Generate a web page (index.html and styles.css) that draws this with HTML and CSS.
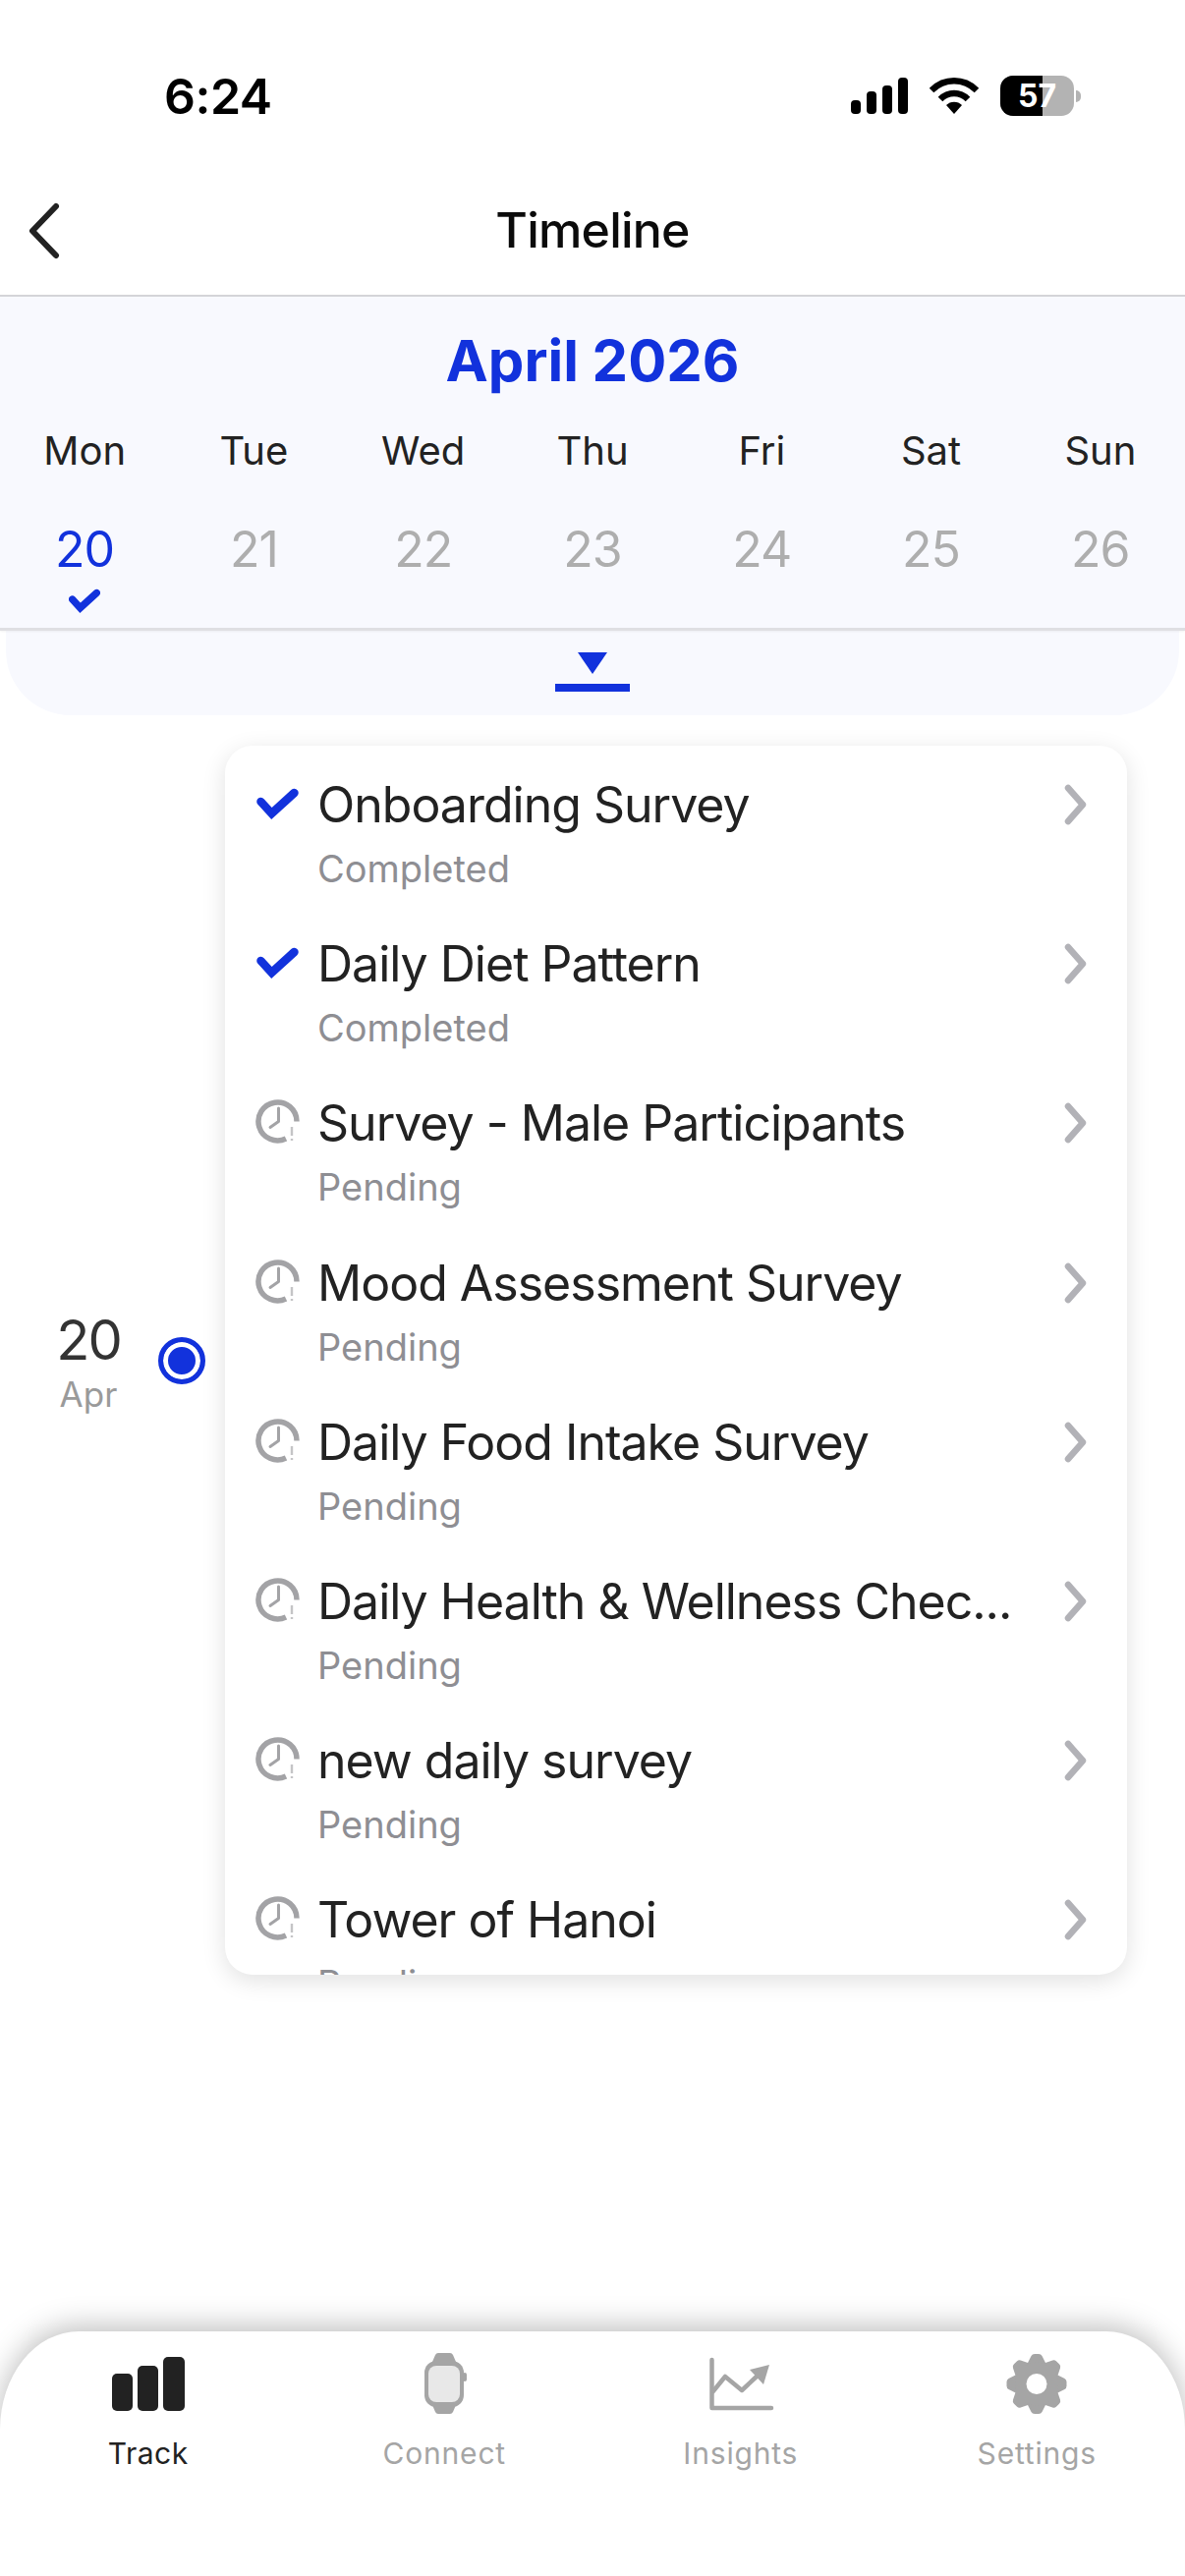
FILE: index.html
```html
<!DOCTYPE html>
<html lang="en">
<head>
<meta charset="utf-8">
<title>Timeline</title>
<link rel="stylesheet" href="styles.css">
</head>
<body>
<svg class="defs" width="0" height="0" aria-hidden="true">
  <symbol id="check" viewBox="0 0 44 34"><path d="M5 15 L16 27 L39 6" fill="none" stroke="#1232dc" stroke-linecap="round" stroke-linejoin="miter"/></symbol>
  <symbol id="clock" viewBox="0 0 45 45">
    <path d="M42 22.5 A19.5 19.5 0 1 0 31 40" fill="none" stroke="#a3a3a6" stroke-width="5.5"/>
    <path d="M23.5 9 V22.5 L15 28.5" fill="none" stroke="#a3a3a6" stroke-width="3" stroke-linecap="round" stroke-linejoin="round"/>
    <path d="M37 28 V37 M37 40 V42" fill="none" stroke="#c4c4c6" stroke-width="2.4"/>
  </symbol>
  <symbol id="chev" viewBox="0 0 24 42"><path d="M4 4 L19 21 L4 38" fill="none" stroke="#b2b2b7" stroke-width="6.5" stroke-linecap="round" stroke-linejoin="round"/></symbol>
  <symbol id="tooth" viewBox="0 0 76 64"><path d="M28 12 L32.5 3 Q33.5 1 36 1 H40 Q42.500 1 43.500 3 L48 12 Z"/></symbol>
</svg>
<div class="page">
  <header class="status">
    <span class="time">6:24</span>
    <div class="status-icons">
      <svg class="signal" width="58" height="38" viewBox="0 0 58 38"><rect x="0" y="23" width="10" height="14" rx="4"/><rect x="16" y="14" width="10" height="23" rx="4"/><rect x="32" y="8" width="10" height="29" rx="4"/><rect x="48" y="0" width="10" height="37" rx="4"/></svg>
      <svg class="wifi" width="50" height="38" viewBox="0 0 50 38"><path d="M2 13 C15 0 35 0 48 13" fill="none" stroke="#000" stroke-width="6.5"/><path d="M11 22 C19 14 31 14 39 22" fill="none" stroke="#000" stroke-width="6.5"/><path d="M17 28 C21 23.5 29 23.5 33 28 L25 37 Z" fill="#000"/></svg>
      <div class="battery"><div class="battery-body"><span class="battery-level"></span><span class="battery-text">57</span></div><span class="battery-nub"></span></div>
    </div>
  </header>
  <nav class="navbar">
    <svg class="back" width="36" height="60" viewBox="0 0 36 60"><path d="M30 5 L6 30 L30 55" fill="none" stroke="#222" stroke-width="6" stroke-linecap="round" stroke-linejoin="round"/></svg>
    <h1 class="nav-title">Timeline</h1>
  </nav>
  <section class="calendar">
    <h2 class="month">April 2026</h2>
    <div class="week">
      <div class="day"><span class="dow">Mon</span><span class="date is-active">20</span><svg class="day-check" width="32" height="25"><use href="#check"/></svg></div>
      <div class="day"><span class="dow">Tue</span><span class="date">21</span></div>
      <div class="day"><span class="dow">Wed</span><span class="date">22</span></div>
      <div class="day"><span class="dow">Thu</span><span class="date">23</span></div>
      <div class="day"><span class="dow">Fri</span><span class="date">24</span></div>
      <div class="day"><span class="dow">Sat</span><span class="date">25</span></div>
      <div class="day"><span class="dow">Sun</span><span class="date">26</span></div>
    </div>
  </section>
  <div class="expander">
    <span class="expander-tri"></span>
    <span class="expander-bar"></span>
  </div>
  <main class="timeline">
    <div class="stamp"><span class="stamp-day">20</span><span class="stamp-month">Apr</span></div>
    <span class="dot"></span>
    <div class="card">
      <a class="row"><svg class="row-icon" width="44" height="34"><use href="#check"/></svg><div class="row-text"><div class="row-title">Onboarding Survey</div><div class="row-sub">Completed</div></div><svg class="row-chev" width="24" height="42"><use href="#chev"/></svg></a>
      <a class="row"><svg class="row-icon" width="44" height="34"><use href="#check"/></svg><div class="row-text"><div class="row-title">Daily Diet Pattern</div><div class="row-sub">Completed</div></div><svg class="row-chev" width="24" height="42"><use href="#chev"/></svg></a>
      <a class="row"><svg class="row-icon is-clock" width="45" height="45"><use href="#clock"/></svg><div class="row-text"><div class="row-title">Survey - Male Participants</div><div class="row-sub">Pending</div></div><svg class="row-chev" width="24" height="42"><use href="#chev"/></svg></a>
      <a class="row"><svg class="row-icon is-clock" width="45" height="45"><use href="#clock"/></svg><div class="row-text"><div class="row-title">Mood Assessment Survey</div><div class="row-sub">Pending</div></div><svg class="row-chev" width="24" height="42"><use href="#chev"/></svg></a>
      <a class="row"><svg class="row-icon is-clock" width="45" height="45"><use href="#clock"/></svg><div class="row-text"><div class="row-title">Daily Food Intake Survey</div><div class="row-sub">Pending</div></div><svg class="row-chev" width="24" height="42"><use href="#chev"/></svg></a>
      <a class="row"><svg class="row-icon is-clock" width="45" height="45"><use href="#clock"/></svg><div class="row-text"><div class="row-title">Daily Health &amp; Wellness Chec...</div><div class="row-sub">Pending</div></div><svg class="row-chev" width="24" height="42"><use href="#chev"/></svg></a>
      <a class="row"><svg class="row-icon is-clock" width="45" height="45"><use href="#clock"/></svg><div class="row-text"><div class="row-title">new daily survey</div><div class="row-sub">Pending</div></div><svg class="row-chev" width="24" height="42"><use href="#chev"/></svg></a>
      <a class="row"><svg class="row-icon is-clock" width="45" height="45"><use href="#clock"/></svg><div class="row-text"><div class="row-title">Tower of Hanoi</div><div class="row-sub">Pending</div></div><svg class="row-chev" width="24" height="42"><use href="#chev"/></svg></a>
    </div>
  </main>
  <footer class="tabbar">
    <div class="tab is-current">
      <svg class="tab-icon" width="76" height="64" viewBox="0 0 76 64"><rect x="1" y="21" width="21" height="38" rx="5" fill="#222"/><rect x="27" y="13" width="21" height="46" rx="5" fill="#222"/><rect x="53" y="4" width="22" height="55" rx="5" fill="#222"/></svg>
      <span class="tab-label">Track</span>
    </div>
    <div class="tab">
      <svg class="tab-icon" width="76" height="64" viewBox="0 0 76 64"><path d="M26 9 L29 2 Q30 0 32 0 H44 Q46 0 47 2 L50 9 Z M26 53 H50 L47 60 Q46 62 44 62 H32 Q30 62 29 60 Z" fill="#a5a5a5"/><rect x="18" y="8" width="40" height="47" rx="12" fill="#a5a5a5"/><rect x="22" y="13" width="32" height="37" rx="8" fill="#e8e8e8"/><rect x="57" y="20" width="4" height="9" rx="2" fill="#a5a5a5"/></svg>
      <span class="tab-label">Connect</span>
    </div>
    <div class="tab">
      <svg class="tab-icon" width="76" height="64" viewBox="0 0 76 64"><path d="M8.500 7 V56 H69" fill="none" stroke="#a5a5a5" stroke-width="4.500" stroke-linecap="round" stroke-linejoin="round"/><path d="M9 40 L22 24 L39 38 L55 23" fill="none" stroke="#a5a5a5" stroke-width="4.500" stroke-linejoin="round"/><path d="M47 17 L67 12 L61 32 Z" fill="#a5a5a5"/></svg>
      <span class="tab-label">Insights</span>
    </div>
    <div class="tab">
      <svg class="tab-icon gear" width="76" height="64" viewBox="0 0 76 64">
        <use href="#tooth" width="76" height="64"/>
        <use href="#tooth" width="76" height="64" transform="rotate(45 38 31.5)"/>
        <use href="#tooth" width="76" height="64" transform="rotate(90 38 31.5)"/>
        <use href="#tooth" width="76" height="64" transform="rotate(135 38 31.5)"/>
        <use href="#tooth" width="76" height="64" transform="rotate(180 38 31.5)"/>
        <use href="#tooth" width="76" height="64" transform="rotate(225 38 31.5)"/>
        <use href="#tooth" width="76" height="64" transform="rotate(270 38 31.5)"/>
        <use href="#tooth" width="76" height="64" transform="rotate(315 38 31.5)"/>
        <circle cx="38" cy="31.500" r="22"/>
        <circle class="gear-hole" cx="38" cy="31.500" r="10.500"/>
      </svg>
      <span class="tab-label">Settings</span>
    </div>
  </footer>
</div>
</body>
</html>
```
FILE: styles.css
```css
* { box-sizing: border-box; }
html, body { margin: 0; padding: 0; background: #fff; }
body { font-family: Inter, "Liberation Sans", sans-serif; color: #222; }
.defs { position: absolute; }
.page { width: 1206px; height: 2622px; display: flex; flex-direction: column; overflow: hidden; }

.status { height: 190px; padding: 71px 106px 0 167px; display: flex; justify-content: space-between; align-items: flex-start; }
.time { font-size: 50px; line-height: 54px; font-weight: 600; color: #000; letter-spacing: -0.5px; }
.status-icons { display: flex; align-items: center; gap: 22px; padding-top: 6px; }
.signal { fill: #000; display: block; margin-left: -2px; }
.wifi { display: block; }
.battery { display: flex; align-items: center; gap: 2px; }
.battery-body { position: relative; width: 75px; height: 41px; border-radius: 13px; background: #b3b3b3; overflow: hidden; display: flex; align-items: center; justify-content: center; }
.battery-level { position: absolute; left: 0; top: 0; bottom: 0; width: 43px; background: #000; }
.battery-text { position: relative; color: #fff; font-size: 32px; font-weight: 700; line-height: 1; }
.battery-nub { width: 5px; height: 12px; background: #b3b3b3; border-radius: 0 5px 5px 0; }

.navbar { height: 112px; position: relative; display: flex; align-items: center; justify-content: center; border-bottom: 2px solid #d4d4d8; }
.back { position: absolute; left: 27px; top: 15px; }
.nav-title { margin: 0; font-size: 50px; font-weight: 500; color: #0b0b0b; line-height: 60px; padding-bottom: 22px; letter-spacing: -0.8px; }

.calendar { height: 340px; background: #f8f9fe; border-bottom: 3px solid #dfdfe3; padding-top: 33px; box-shadow: 0 1px 2px rgba(0,0,0,.05); position: relative; z-index: 1; }
.month { margin: 0; text-align: center; font-size: 58px; line-height: 64px; font-weight: 700; color: #1232dc; }
.week { display: grid; grid-template-columns: repeat(7, 1fr); margin-top: 36px; }
.day { display: flex; flex-direction: column; align-items: center; }
.dow { font-size: 40px; line-height: 48px; color: #222; }
.date { font-size: 50px; line-height: 56px; margin-top: 48px; color: #aeaeae; letter-spacing: -1px; }
.date.is-active { color: #1232dc; }
.day-check { margin-top: 12px; stroke-width: 10px; }

.expander { margin: 0 6px; height: 86px; background: #f8f9fe; border-radius: 0 0 66px 66px; display: flex; flex-direction: column; align-items: center; padding-top: 22px; }
.expander-tri { width: 0; height: 0; border-left: 15px solid transparent; border-right: 15px solid transparent; border-top: 22px solid #1232dc; }
.expander-bar { width: 76px; height: 8px; background: #1232dc; margin-top: 10px; }

.timeline { flex: 1; display: flex; align-items: flex-start; padding-top: 31px; position: relative; }
.stamp { width: 180px; flex: none; display: flex; flex-direction: column; align-items: center; margin-top: 571px; }
.stamp-day { font-size: 56px; line-height: 68px; color: #333; letter-spacing: -2px; }
.stamp-month { font-size: 35px; line-height: 36px; color: #9a9a9a; margin-top: 3px; }
.dot { flex: none; width: 48px; height: 48px; margin: 602px 0 0 -19px; border-radius: 50%; border: 5px solid #1232dc; background: #1232dc; box-shadow: inset 0 0 0 5px #fff; }
.card { margin-left: 20px; width: 918px; height: 1251px; border-radius: 28px; background: #fff; overflow: hidden; box-shadow: 0 6px 24px rgba(0,0,0,.12); padding-top: 10px; flex: none; }
.row { height: 162.2px; display: flex; align-items: flex-start; padding: 19px 40px 0 31px; }
.row-icon { flex: none; margin-top: 13px; width: 45px; margin-right: 18px; stroke-width: 8.5px; }
.row-icon.is-clock { margin-top: 7px; }
.row-text { flex: 1; min-width: 0; }
.row-title { font-size: 50px; line-height: 62px; color: #222; white-space: nowrap; letter-spacing: -1px; }
.row-sub { font-size: 38px; line-height: 48px; color: #8e8e93; margin-top: 10px; }
.row-chev { flex: none; margin: 10px 0 0 24px; }

.tabbar { flex: none; height: 249px; margin-top: auto; background: #fff; border-radius: 80px 80px 0 0 / 100px 100px 0 0; box-shadow: 0 -5px 30px rgba(0,0,0,.26); display: grid; grid-template-columns: repeat(4, 1fr); padding-top: 22px; position: relative; }
.tab { display: flex; flex-direction: column; align-items: center; }
.tab-icon { display: block; }
.gear { fill: #a5a5a5; }
.gear-hole { fill: #fff; }
.tab-label { font-size: 30px; line-height: 36px; margin-top: 20px; color: #a5a5a5; letter-spacing: .8px; }
.is-current .tab-label { color: #222; letter-spacing: .5px; }
```
